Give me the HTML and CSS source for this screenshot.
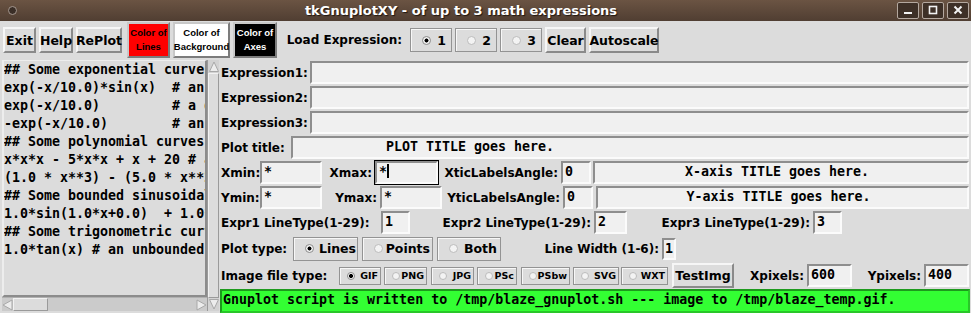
FILE: index.html
```html
<!DOCTYPE html>
<html>
<head>
    <meta charset="UTF-8">
    <title>tkGnuplotXY</title>
    <link rel="stylesheet" href="styles.css">
</head>
<body>
<div class="win">
    <div class="titlebar">
        <span class="win-menu"></span>
        <span class="win-title">tkGnuplotXY - of up to 3 math expressions</span>
        <span class="win-btns">
            <span class="wbtn"><svg width="20" height="15" viewBox="0 0 20 15"><rect x="6" y="9" width="8" height="2" fill="#f2f2f2"/></svg></span>
            <span class="wbtn"><svg width="20" height="15" viewBox="0 0 20 15"><rect x="6.5" y="3.5" width="7" height="7" fill="none" stroke="#f2f2f2" stroke-width="1.6"/></svg></span>
            <span class="wbtn"><svg width="20" height="15" viewBox="0 0 20 15"><path d="M6.5 3.5 L13.5 10.5 M13.5 3.5 L6.5 10.5" stroke="#f2f2f2" stroke-width="2"/></svg></span>
        </span>
    </div>

    <div class="toolbar">
        <span class="btn w-exit">Exit</span>
        <span class="btn w-help">Help</span>
        <span class="btn w-replot">RePlot</span>
        <span class="btn cbtn red sp">Color of<br>Lines</span>
        <span class="btn cbtn white w-bg">Color of<br>Background</span>
        <span class="btn cbtn black w-ax">Color of<br>Axes</span>
        <span class="lbl r w-load">Load Expression:</span>
        <span class="rb big on sp"><i></i>1</span>
        <span class="rb big"><i></i>2</span>
        <span class="rb big"><i></i>3</span>
        <span class="btn w-clear">Clear</span>
        <span class="btn w-auto">Autoscale</span>
    </div>

    <div class="main">
        <div class="left">
<pre class="txt">## Some exponential curves:
exp(-x/10.0)*sin(x)  # an exponentially decaying sine wave
exp(-x/10.0)         # a decaying exponential
-exp(-x/10.0)        # an inverted decaying exponential
## Some polynomial curves:
x*x*x - 5*x*x + x + 20 # a cubic
(1.0 * x**3) - (5.0 * x**2) + (1.0 * x) + 20.0
## Some bounded sinusoidal curves:
1.0*sin(1.0*x+0.0)  + 1.0*cos(2.0*x+0.0)
## Some trigonometric curves:
1.0*tan(x) # an unbounded trig function</pre>
            <div class="vscroll">
                <svg width="12" height="13" viewBox="0 0 12 13"><path d="M1.5 11.5 L6 2 L10.5 11.5 Z" fill="#ececec" stroke="#a8a8a8"/></svg>
                <span class="vthumb"></span>
                <svg width="12" height="13" viewBox="0 0 12 13"><path d="M1.5 1.5 L6 11 L10.5 1.5 Z" fill="#ececec" stroke="#a8a8a8"/></svg>
            </div>
            <div class="hscroll">
                <svg width="11" height="14" viewBox="0 0 11 14"><path d="M10 2 L1 7 L10 12 Z" fill="#ececec" stroke="#a8a8a8"/></svg>
                <span class="hthumb"></span>
                <span class="trough"></span>
                <svg width="11" height="14" viewBox="0 0 11 14"><path d="M1 2 L10 7 L1 12 Z" fill="#ececec" stroke="#a8a8a8"/></svg>
            </div>
        </div>

        <div class="right">
            <div class="row">
                <span class="lbl w-expr">Expression1:</span>
                <span class="entry grow"></span>
            </div>
            <div class="row">
                <span class="lbl w-expr">Expression2:</span>
                <span class="entry grow"></span>
            </div>
            <div class="row">
                <span class="lbl w-expr">Expression3:</span>
                <span class="entry grow"></span>
            </div>
            <div class="row">
                <span class="lbl w-ptitle">Plot title:</span>
                <span class="entry grow center ttl">PLOT TITLE goes here.</span>
            </div>
            <div class="row">
                <span class="lbl w-min">Xmin:</span>
                <span class="entry w62">*</span>
                <span class="lbl r w53">Xmax:</span>
                <span class="entry w63 focus">*<b class="caret"></b></span>
                <span class="lbl r w123">XticLabelsAngle:</span>
                <span class="entry w30">0</span>
                <span class="entry grow center axt sp2">X-axis TITLE goes here.</span>
            </div>
            <div class="row">
                <span class="lbl w-min">Ymin:</span>
                <span class="entry w62">*</span>
                <span class="lbl r w58">Ymax:</span>
                <span class="entry w62">*</span>
                <span class="lbl r w121">YticLabelsAngle:</span>
                <span class="entry w30">0</span>
                <span class="entry grow center axt sp3">Y-axis TITLE goes here.</span>
            </div>
            <div class="row">
                <span class="lbl w160">Expr1 LineType(1-29):</span>
                <span class="entry w29">1</span>
                <span class="lbl r w184">Expr2 LineType(1-29):</span>
                <span class="entry w33">2</span>
                <span class="lbl r w186">Expr3 LineType(1-29):</span>
                <span class="entry w29">3</span>
            </div>
            <div class="row tall">
                <span class="lbl w72">Plot type:</span>
                <span class="rb big on w65"><i></i>Lines</span>
                <span class="rb big w71 sp4"><i></i>Points</span>
                <span class="rb big w64 sp4"><i></i>Both</span>
                <span class="lbl r w161">Line Width (1-6):</span>
                <span class="entry w14 lw">1</span>
            </div>
            <div class="row tall">
                <span class="lbl w118">Image file type:</span>
                <span class="rb small on w42"><i></i>GIF</span>
                <span class="rb small w43 sp3"><i></i>PNG</span>
                <span class="rb small w43 sp4"><i></i>JPG</span>
                <span class="rb small w40 sp3"><i></i>PSc</span>
                <span class="rb small w49 sp4"><i></i>PSbw</span>
                <span class="rb small w46 sp3"><i></i>SVG</span>
                <span class="rb small w47 sp2"><i></i>WXT</span>
                <span class="btn tb sp4">TestImg</span>
                <span class="lbl r w73">Xpixels:</span>
                <span class="entry w45">600</span>
                <span class="lbl r w72">Ypixels:</span>
                <span class="entry w45">400</span>
            </div>
            <div class="status">Gnuplot script is written to /tmp/blaze_gnuplot.sh --- image to /tmp/blaze_temp.gif.</div>
        </div>
    </div>
</div>
</body>
</html>
```

FILE: styles.css
```css
body { margin: 0; background: #dcdcdc; color: #000; font-family: "DejaVu Sans", "Liberation Sans", sans-serif; font-weight: bold; font-size: 12px;}
.win { width: 971px; height: 313px; overflow: hidden;}

/* window frame */
.titlebar {
    height: 21px;
    display: flex;
    align-items: center;
    background: linear-gradient(#6b5443, #503e32);
}
.win-menu {
    width: 7px;
    height: 7px;
    margin-left: 8px;
    border-radius: 50%;
    background: #3a2e27;
    border: 1px solid #a59890;
}
.win-title {
    flex: 1;
    padding-left: 8px;
    text-align: center;
    color: #fff;
    font-family: "DejaVu Sans", sans-serif;
    font-size: 13px;
    text-shadow: 1px 1px 1px #20160f;
}
.win-btns { display: flex; gap: 3px; margin-right: 2px;}
.wbtn {
    width: 20px;
    height: 15px;
    border: 1px solid #b4a89f;
    border-radius: 2px;
    background: #3e3027;
    display: flex;
}

/* toolbar */
.toolbar {
    height: 38px;
    display: flex;
    align-items: center;
    gap: 3px;
    padding-left: 3px;
}
.btn {
    box-sizing: border-box;
    height: 26px;
    display: flex;
    align-items: center;
    justify-content: center;
    border: 2px solid;
    border-color: #f6f6f6 #8a8a8a #8a8a8a #f6f6f6;
    background: #dcdcdc;
    font-size: 12.5px;
    white-space: nowrap;
    flex: none;
}
.w-exit { width: 33px;}
.w-help { width: 34px;}
.w-replot { width: 46px;}
.w-clear { width: 41px;}
.w-auto { width: 70px;}
.cbtn {
    width: 43px;
    height: 36px;
    font-family: "Liberation Sans", sans-serif;
    font-size: 9.5px;
    line-height: 14px;
    text-align: center;
    border-color: #c8c8c8 #7c7c7c #7c7c7c #c8c8c8;
}
.red { background: #ff0000;}
.white { background: #fff;}
.black { background: #000; color: #fff;}
.w-bg { width: 57px;}
.w-ax { width: 44px;}
.w-load { width: 125px;}

.sp { margin-left: 2px;}
.sp2 { margin-left: 2px;}
.sp3 { margin-left: 3px;}
.sp4 { margin-left: 4px;}

/* labels */
.lbl { flex: none; white-space: nowrap; box-sizing: border-box;}
.r { text-align: right; padding-right: 3px;}
.w-expr { width: 89px;}
.w-ptitle { width: 70px;}
.w-min { width: 39px;}
.w53 { width: 53px;}
.w58 { width: 58px;}
.w72 { width: 72px;}
.w73 { width: 73px;}
.w118 { width: 118px;}
.w121 { width: 121px;}
.w123 { width: 123px;}
.w160 { width: 160px;}
.w161 { width: 161px;}
.w184 { width: 184px;}
.w186 { width: 186px;}

/* radio buttons */
.rb {
    flex: none;
    box-sizing: border-box;
    display: flex;
    align-items: center;
    justify-content: space-between;
    border: 1px solid #939393;
    box-shadow: inset 1px 1px 0 #f7f7f7;
    white-space: nowrap;
}
.rb i {
    box-sizing: border-box;
    border-radius: 50%;
    border: 1px solid #bcbcbc;
    background: #f3f3f3;
}
.rb.on i { border-color: #8d8d8d; background: radial-gradient(circle, #000 0 1.7px, #f3f3f3 2.3px);}
.rb.big { width: 42px; height: 24px; padding: 0 5px 0 11px; font-size: 12.5px;}
.rb.big i { width: 9px; height: 9px;}
.rb.small { height: 18px; padding: 0 2px 0 7px; font-size: 9.5px;}
.rb.small i { width: 8px; height: 8px;}
.rb.w65 { width: 65px; padding-right: 1px;}
.rb.w71 { width: 71px; padding-right: 2px;}
.rb.w64 { width: 64px; padding-right: 3px;}
.w40 { width: 40px;}
.w42 { width: 42px;}
.w43 { width: 43px;}
.w46 { width: 46px;}
.w47 { width: 47px;}
.w49 { width: 49px;}

/* main area */
.main { display: flex; padding-top: 1px;}
.left {
    flex: none;
    display: grid;
    grid-template-columns: 205px 12px;
    grid-template-rows: 237px 14px;
    margin-left: 2px;
}
.txt {
    margin: 0;
    box-sizing: border-box;
    border: 2px solid;
    border-top-width: 1px;
    border-color: #ededed #8c8c8c #8c8c8c #ededed;
    overflow: hidden;
    white-space: pre;
    font-family: "DejaVu Sans Mono", monospace;
    font-weight: bold;
    font-size: 13.3px;
    line-height: 18px;
}
.vscroll {
    grid-row: 1 / 3;
    grid-column: 2;
    display: flex;
    flex-direction: column;
    background: #d2d2d2;
    border-left: 1px solid #9a9a9a;
}
.vscroll svg, .hscroll svg { flex: none; display: block;}
.vthumb {
    flex: 1;
    box-sizing: border-box;
    border: 1px solid;
    border-color: #f2f2f2 #9a9a9a #9a9a9a #f2f2f2;
    background: #dcdcdc;
}
.hscroll {
    display: flex;
    background: #cbcbcb;
    border-top: 1px solid #b0b0b0;
}
.hthumb {
    width: 35px;
    box-sizing: border-box;
    border: 1px solid;
    border-color: #f2f2f2 #9a9a9a #9a9a9a #f2f2f2;
    background: #dcdcdc;
}
.trough { flex: 1;}

.right {
    flex: 1;
    display: flex;
    flex-direction: column;
    padding: 0 2px;
}
.row { display: flex; align-items: center; height: 25px;}
.row.tall { height: 27px;}

.entry {
    flex: none;
    box-sizing: border-box;
    height: 23px;
    padding: 0 2px;
    border: 2px solid;
    border-color: #8e8e8e #fbfbfb #fbfbfb #8e8e8e;
    background: #f0f0f0;
    font-family: "DejaVu Sans Mono", monospace;
    font-weight: bold;
    font-size: 13.3px;
    line-height: 17px;
    white-space: pre;
    overflow: hidden;
}
.grow { flex: 1;}
.center { text-align: center;}
.ttl { padding-right: 322px;}
.axt { padding-right: 10px;}
.focus { outline: 1px solid #000; position: relative;}
.caret {
    display: inline-block;
    width: 2px;
    height: 14px;
    background: #000;
    vertical-align: -2px;
}
.w14 { width: 14px;}
.w29 { width: 29px;}
.w30 { width: 30px;}
.w33 { width: 33px;}
.w45 { width: 45px;}
.w62 { width: 62px;}
.w63 { width: 63px;}
.lw { padding: 0 1px; height: 22px;}

.tb { width: 62px; height: 25px;}

.status {
    height: 24px;
    margin: 0 -1px;
    box-sizing: border-box;
    padding-left: 1px;
    border: 2px solid;
    border-color: #1d9a1d #29c729 #29c729 #1d9a1d;
    background: #33ff33;
    font-family: "DejaVu Sans Mono", monospace;
    font-size: 13.3px;
    line-height: 18px;
    white-space: pre;
    overflow: hidden;
}
```
